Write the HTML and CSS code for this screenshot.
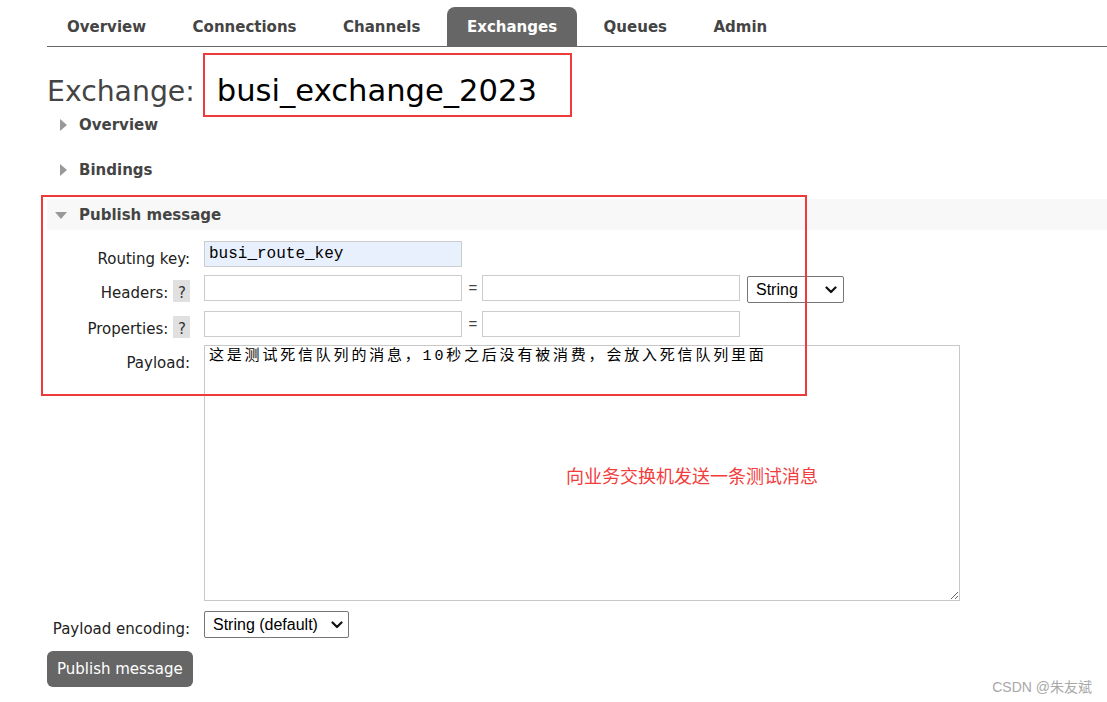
FILE: index.html
```html
<!DOCTYPE html>
<html lang="en">
<head>
  <meta charset="UTF-8" />
  <title>RabbitMQ Management - Exchange</title>
  <link rel="stylesheet" href="styles.css">
</head>
<body>
  <div class="page">
    <ul class="tabs">
      <li><a class="tab">Overview</a></li>
      <li><a class="tab">Connections</a></li>
      <li><a class="tab">Channels</a></li>
      <li><a class="tab tab-active">Exchanges</a></li>
      <li><a class="tab">Queues</a></li>
      <li><a class="tab">Admin</a></li>
    </ul>

    <h1 class="title">Exchange: <span class="name">busi_exchange_2023</span></h1>

    <div class="section">
      <div class="section-head"><span class="arrow arrow-right"></span>Overview</div>
    </div>

    <div class="section">
      <div class="section-head"><span class="arrow arrow-right"></span>Bindings</div>
    </div>

    <!-- Publish message -->
    <div class="section section-open">
      <div class="mark-form"></div>
      <div class="section-head"><span class="arrow arrow-down"></span>Publish message</div>

      <form class="publish">
        <div class="row">
          <label class="field-label">Routing key:</label>
          <input class="field field-filled" type="text" value="busi_route_key" />
        </div>

        <div class="row">
          <label class="field-label field-label-help">Headers: <span class="help">?</span></label>
          <input class="field" type="text" />
          <span class="eq">=</span>
          <input class="field" type="text" />
          <div class="select select-type">
            <span>String</span>
            <svg viewBox="0 0 12 8" width="12" height="8"><polyline points="1.5 1.5 6 6 10.5 1.5" /></svg>
          </div>
        </div>

        <div class="row">
          <label class="field-label field-label-help">Properties: <span class="help">?</span></label>
          <input class="field" type="text" />
          <span class="eq">=</span>
          <input class="field" type="text" />
        </div>

        <div class="row row-payload">
          <label class="field-label">Payload:</label>
          <div class="payload-wrap">
            <textarea class="payload">这是测试死信队列的消息，10秒之后没有被消费，会放入死信队列里面</textarea>
            <span class="note">向业务交换机发送一条测试消息</span>
          </div>
        </div>

        <div class="row">
          <label class="field-label">Payload encoding:</label>
          <div class="select select-encoding">
            <span>String (default)</span>
            <svg viewBox="0 0 12 8" width="12" height="8"><polyline points="1.5 1.5 6 6 10.5 1.5" /></svg>
          </div>
        </div>

        <button class="submit" type="button">Publish message</button>
      </form>
    </div>
  </div>

  <div class="watermark">CSDN @朱友斌</div>
</body>
</html>
```

FILE: styles.css
```css
/* RabbitMQ management look */
html, body {
  height: 100%;
}

body {
  margin: 0;
  overflow: hidden;
  background: #fff;
  color: #333;
  font-family: "DejaVu Sans", Verdana, sans-serif;
  font-size: 15px;
}

.page {
  padding-left: 47px;
}

/* Top tabs */
.tabs {
  display: flex;
  list-style: none;
  margin: 7px 0 0 0;
  padding: 0;
  border-bottom: 1px solid #666;
}

.tab {
  display: block;
  height: 38px;
  line-height: 39px;
  padding: 1px 20px 0 20px;
  margin-right: 6.5px;
  font-size: 15px;
  font-weight: bold;
  color: #444;
  border-radius: 8px 8px 0 0;
}

.tab-active {
  background: #666;
  color: #fff;
}

/* Heading */
.title {
  margin: 27px 0 0 0;
  font-size: 28.3px;
  font-weight: normal;
  line-height: 34px;
  color: #444;
}

.name {
  position: relative;
  margin-left: 13px;
  font-size: 30.6px;
  color: #000;
}

.name::after {
  content: '';
  position: absolute;
  left: -14px;
  right: -35px;
  top: -20px;
  bottom: -9px;
  border: 2px solid #ee3a3a;
}

/* Sections */
.section + .section {
  margin-top: 14px;
}

.section-head {
  display: flex;
  align-items: center;
  height: 31px;
  font-weight: bold;
  color: #444;
}

.arrow {
  display: block;
  width: 0;
  height: 0;
}

.arrow-right {
  margin: 0 12px 0 13px;
  border-left: 7px solid #999;
  border-top: 6px solid transparent;
  border-bottom: 6px solid transparent;
}

.arrow-down {
  margin: 1px 12px 0 8px;
  border-top: 7px solid #999;
  border-left: 6px solid transparent;
  border-right: 6px solid transparent;
}

.section-open {
  position: relative;
}

.section-open .section-head {
  background: #f8f8f8;
}

.mark-form {
  position: absolute;
  left: -6px;
  top: -4px;
  width: 766px;
  height: 201px;
  box-sizing: border-box;
  border: 2px solid #ee3a3a;
  z-index: 2;
}

/* Publish form */
.publish {
  padding-top: 11px;
}

.row {
  display: flex;
  align-items: flex-start;
  margin-bottom: 8px;
}

.row-payload {
  margin-bottom: 10px;
}

.field-label {
  width: 143px;
  height: 26px;
  box-sizing: border-box;
  flex: none;
  padding-top: 9px;
  margin-right: 14px;
  text-align: right;
  line-height: 18px;
  color: #222;
  white-space: nowrap;
}

.field-label-help {
  padding-top: 5px;
}

.help {
  display: inline-block;
  padding: 4px 4px 0 5px;
  line-height: 18px;
  background: #e0e0e0;
  color: #333;
}

.field {
  width: 258px;
  height: 26px;
  margin: 0;
  padding: 0 4px;
  box-sizing: border-box;
  border: 1px solid #ccc;
  background: #fff;
  font-family: "Liberation Mono", monospace;
  font-size: 16px;
  color: #000;
  outline: none;
}

.field-filled {
  background: #e8f0fe;
}

.eq {
  width: 10px;
  margin: 0 4px 0 6px;
  line-height: 26px;
  text-align: center;
  font-family: "Liberation Sans", Arial, sans-serif;
  color: #444;
}

.select {
  display: flex;
  align-items: center;
  justify-content: space-between;
  height: 27px;
  box-sizing: border-box;
  padding: 0 6px 0 8px;
  border: 1px solid #767676;
  border-radius: 2px;
  background: #fff;
  font-family: "Liberation Sans", Arial, sans-serif;
  font-size: 16px;
  color: #000;
}

.select svg {
  fill: none;
  stroke: #111;
  stroke-width: 2.2;
  stroke-linecap: round;
  stroke-linejoin: round;
}

.select-type {
  width: 97px;
  margin: 1px 0 0 7px;
}

.select-encoding {
  width: 145px;
  padding-right: 5px;
}

.payload-wrap {
  position: relative;
}

.payload {
  display: block;
  width: 756px;
  height: 256px;
  margin: 0;
  padding: 2px 4px;
  box-sizing: border-box;
  border: 1px solid #c8c8c8;
  font-family: "Liberation Mono", "Noto Sans CJK SC", monospace;
  font-size: 15px;
  letter-spacing: 2.8px;
  line-height: 18px;
  color: #000;
  outline: none;
}

.note {
  position: absolute;
  left: 362px;
  top: 118px;
  font-family: "Noto Sans CJK SC", sans-serif;
  font-size: 18px;
  line-height: 24px;
  color: #f23d3d;
  white-space: nowrap;
}

/* Button */
.submit {
  display: block;
  margin: 13px 0 0 0;
  height: 36px;
  padding: 0 10px;
  border: none;
  border-radius: 6px;
  background: #666;
  color: #fff;
  font-family: "DejaVu Sans", Verdana, sans-serif;
  font-size: 15px;
  cursor: pointer;
}

.watermark {
  position: absolute;
  right: 15px;
  top: 676px;
  font-family: "Liberation Sans", "Noto Sans CJK SC", sans-serif;
  font-size: 14px;
  color: #a8a8a8;
}
```
